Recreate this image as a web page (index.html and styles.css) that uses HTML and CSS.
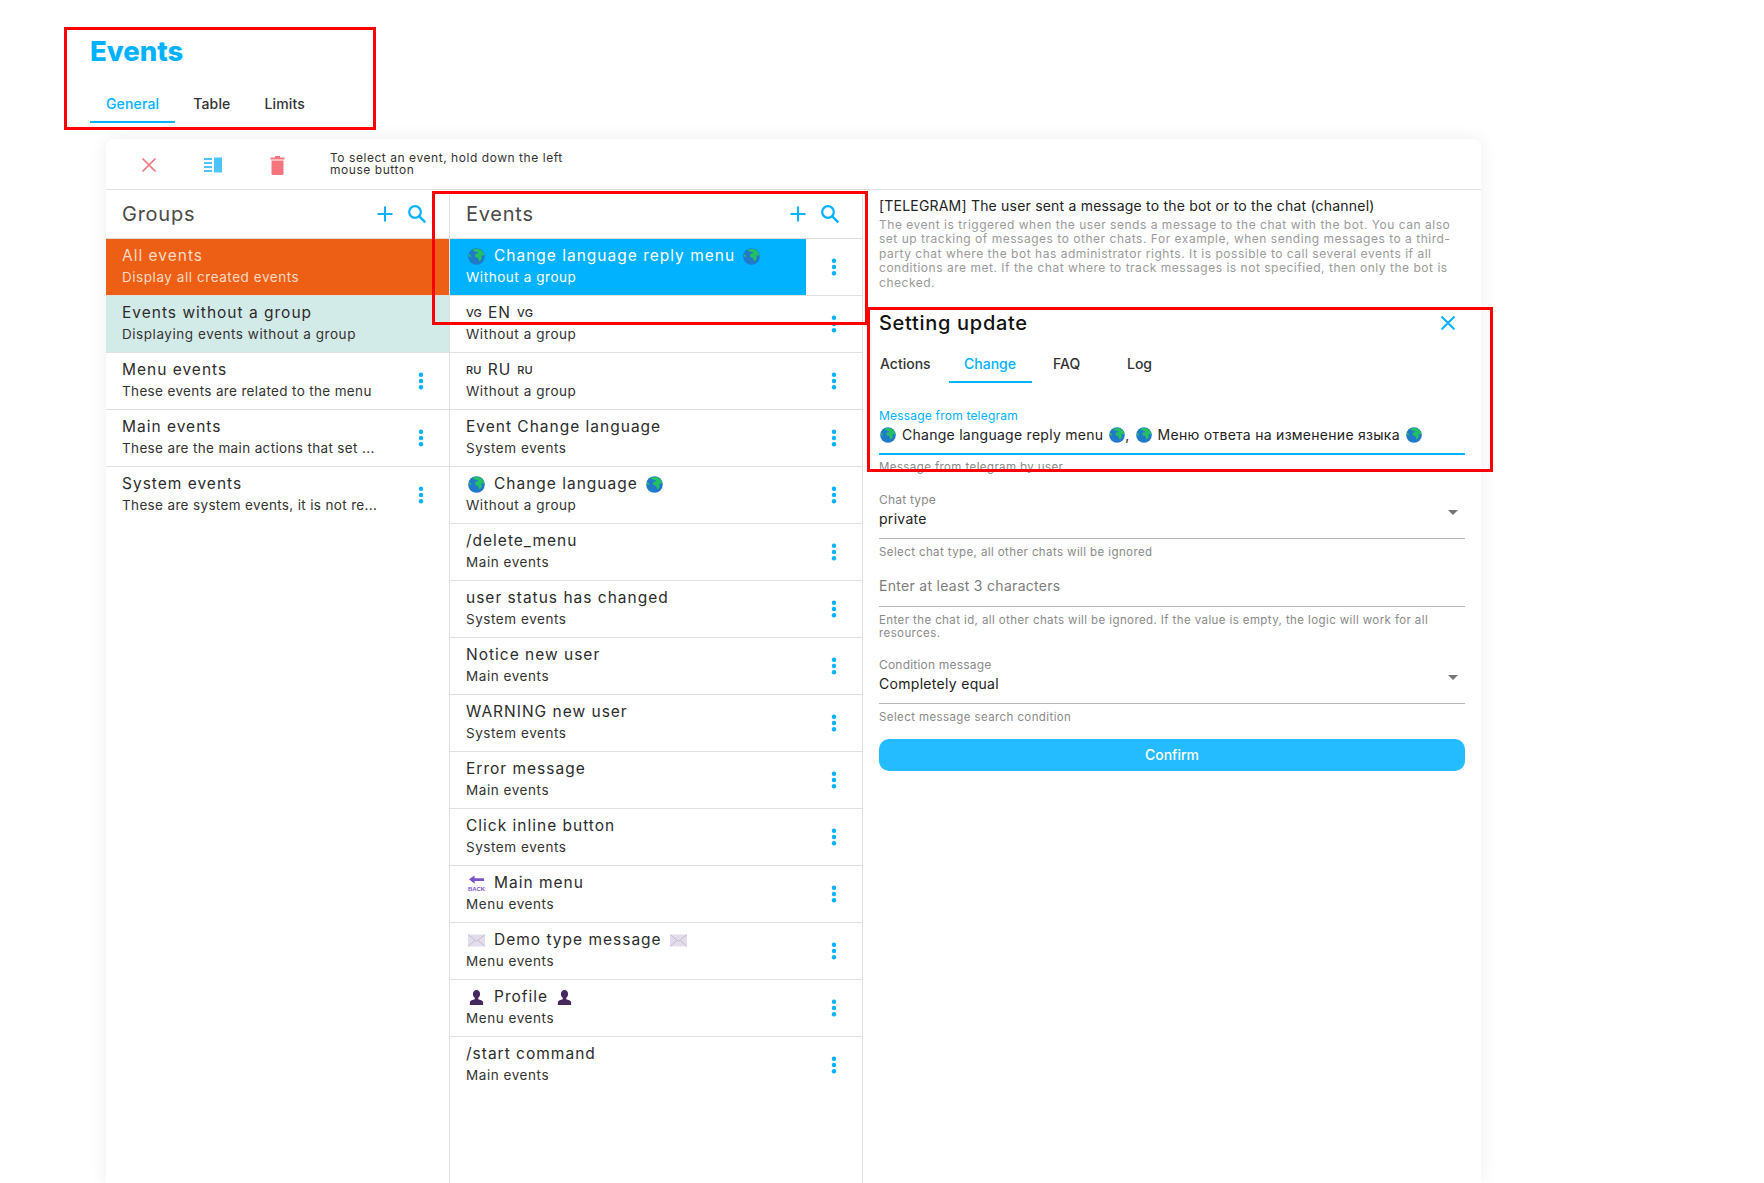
FILE: index.html
```html
<!DOCTYPE html>
<html lang="en">
<head>
<meta charset="utf-8">
<title>Events</title>
<link rel="stylesheet" href="styles.css">
</head>
<body>
<svg class="defs" aria-hidden="true">
  <symbol id="globe" viewBox="0 0 18 18">
    <circle cx="9" cy="9" r="8.800" fill="#2079c9"/>
    <path d="M4.500 2.200C7 .6 11.500.5 14 2.400c1.700 1.300 3 3.300 3.400 5.600-.8.400-2 .2-2.700-.5-.8.700-.6 1.800-.3 2.700.3 1.200-.8 2.900-2 3.700-.9.200-1.100-1.400-1.300-2.500-.3-1.200-1.700-1.100-2.800-1.700C7.200 9 6.900 7.600 7.700 6.600c.7-.8 2.100-.3 2.800-1 .3-.8-.9-1.400-2-1.200-1-.9-2.500-1-4-2.200z" fill="#25c063"/>
    <path d="M1.200 6.500c1.500.4 2.400 1.500 2.300 3-.7.300-1.800-.2-2.500-1.100z" fill="#25c063"/>
  </symbol>
  <symbol id="dots" viewBox="0 0 6 18">
    <circle cx="3" cy="2.800" r="2.200"/><circle cx="3" cy="9" r="2.200"/><circle cx="3" cy="15.200" r="2.200"/>
  </symbol>
  <symbol id="plus" viewBox="0 0 18 18">
    <path d="M9 1.500v15M1.500 9h15" fill="none" stroke="currentColor" stroke-width="2"/>
  </symbol>
  <symbol id="search" viewBox="0 0 20 20">
    <circle cx="8" cy="8" r="5.800" fill="none" stroke="currentColor" stroke-width="2.200"/>
    <path d="M12.300 12.300l6 6" fill="none" stroke="currentColor" stroke-width="2.400"/>
  </symbol>
  <symbol id="mail" viewBox="0 0 20 16">
    <rect y="1" width="20" height="14" fill="#e3dcea"/>
    <path d="M0 1l10 8 10-8M0 15l8-7M20 15l-8-7" fill="none" stroke="#c3b7d0" stroke-width="1"/>
  </symbol>
  <symbol id="bust" viewBox="0 0 18 18">
    <path d="M9 1c2.300 0 3.800 1.800 3.800 4.200 0 1.800-.9 3.300-2 4.100v1.600c2.300.7 4.700 1.400 5.200 2.800v3.300H2v-3.300c.5-1.400 2.900-2.100 5.200-2.800V9.300c-1.100-.8-2-2.300-2-4.100C5.200 2.800 6.700 1 9 1z" fill="#46285f"/>
  </symbol>
</svg>

<header class="page-head">
  <h1 class="page-title">Events</h1>
  <nav class="page-tabs">
    <span class="page-tab is-active">General</span>
    <span class="page-tab">Table</span>
    <span class="page-tab">Limits</span>
  </nav>
</header>

<main class="card">
  <div class="toolbar">
    <span class="tool">
      <svg class="tool-x" viewBox="0 0 16 16"><path d="M1.500 1.500l13 13M14.500 1.500l-13 13" fill="none" stroke="#f4757e" stroke-width="1.700"/></svg>
    </span>
    <span class="tool">
      <svg class="tool-cols" viewBox="0 0 18 16"><path d="M0 1h8v2H0zM0 5h8v2H0zM0 9h8v2H0zM0 13h8v2H0z" fill="#4dc4ff"/><rect x="10" y="0.500" width="8" height="15" fill="#4dc4ff"/></svg>
    </span>
    <span class="tool">
      <svg class="tool-trash" viewBox="0 0 14 20"><path d="M0 2.500h14v2H0zM4.500 1h5v2h-5z" fill="#f4757e"/><path d="M1 5.500h12v13a1.500 1.500 0 0 1-1.500 1.500h-9A1.500 1.500 0 0 1 1 18.500z" fill="#f4757e"/></svg>
    </span>
    <p class="tool-hint">To select an event, hold down the left mouse button</p>
  </div>

  <div class="columns">
    <section class="col col-groups">
      <div class="col-head">
        <h2 class="col-title">Groups</h2>
        <svg class="ico-plus"><use href="#plus"/></svg>
        <svg class="ico-search"><use href="#search"/></svg>
      </div>
      <div class="row row-orange">
        <div class="row-main"><div class="row-title">All events</div><div class="row-sub">Display all created events</div></div>
      </div>
      <div class="row row-teal">
        <div class="row-main"><div class="row-title">Events without a group</div><div class="row-sub">Displaying events without a group</div></div>
      </div>
      <div class="row">
        <div class="row-main"><div class="row-title">Menu events</div><div class="row-sub row-sub-tight">These events are related to the menu</div></div>
        <div class="row-act"><svg class="ico-dots"><use href="#dots"/></svg></div>
      </div>
      <div class="row">
        <div class="row-main"><div class="row-title">Main events</div><div class="row-sub row-sub-tight">These are the main actions that set ...</div></div>
        <div class="row-act"><svg class="ico-dots"><use href="#dots"/></svg></div>
      </div>
      <div class="row row-last">
        <div class="row-main"><div class="row-title">System events</div><div class="row-sub row-sub-tight">These are system events, it is not re...</div></div>
        <div class="row-act"><svg class="ico-dots"><use href="#dots"/></svg></div>
      </div>
    </section>

    <section class="col col-events">
      <div class="col-head">
        <h2 class="col-title">Events</h2>
        <svg class="ico-plus"><use href="#plus"/></svg>
        <svg class="ico-search"><use href="#search"/></svg>
      </div>
      <div class="row">
        <div class="row-main row-blue"><div class="row-title"><svg class="emo"><use href="#globe"/></svg>Change language reply menu<svg class="emo emo-end"><use href="#globe"/></svg></div><div class="row-sub">Without a group</div></div>
        <div class="row-act"><svg class="ico-dots"><use href="#dots"/></svg></div>
      </div>
      <div class="row">
        <div class="row-main"><div class="row-title"><span class="flag">VG</span>EN<span class="flag flag-end">VG</span></div><div class="row-sub">Without a group</div></div>
        <div class="row-act"><svg class="ico-dots"><use href="#dots"/></svg></div>
      </div>
      <div class="row">
        <div class="row-main"><div class="row-title"><span class="flag">RU</span>RU<span class="flag flag-end">RU</span></div><div class="row-sub">Without a group</div></div>
        <div class="row-act"><svg class="ico-dots"><use href="#dots"/></svg></div>
      </div>
      <div class="row">
        <div class="row-main"><div class="row-title">Event Change language</div><div class="row-sub">System events</div></div>
        <div class="row-act"><svg class="ico-dots"><use href="#dots"/></svg></div>
      </div>
      <div class="row">
        <div class="row-main"><div class="row-title"><svg class="emo"><use href="#globe"/></svg>Change language<svg class="emo emo-end"><use href="#globe"/></svg></div><div class="row-sub">Without a group</div></div>
        <div class="row-act"><svg class="ico-dots"><use href="#dots"/></svg></div>
      </div>
      <div class="row">
        <div class="row-main"><div class="row-title">/delete_menu</div><div class="row-sub">Main events</div></div>
        <div class="row-act"><svg class="ico-dots"><use href="#dots"/></svg></div>
      </div>
      <div class="row">
        <div class="row-main"><div class="row-title">user status has changed</div><div class="row-sub">System events</div></div>
        <div class="row-act"><svg class="ico-dots"><use href="#dots"/></svg></div>
      </div>
      <div class="row">
        <div class="row-main"><div class="row-title">Notice new user</div><div class="row-sub">Main events</div></div>
        <div class="row-act"><svg class="ico-dots"><use href="#dots"/></svg></div>
      </div>
      <div class="row">
        <div class="row-main"><div class="row-title">WARNING new user</div><div class="row-sub">System events</div></div>
        <div class="row-act"><svg class="ico-dots"><use href="#dots"/></svg></div>
      </div>
      <div class="row">
        <div class="row-main"><div class="row-title">Error message</div><div class="row-sub">Main events</div></div>
        <div class="row-act"><svg class="ico-dots"><use href="#dots"/></svg></div>
      </div>
      <div class="row">
        <div class="row-main"><div class="row-title">Click inline button</div><div class="row-sub">System events</div></div>
        <div class="row-act"><svg class="ico-dots"><use href="#dots"/></svg></div>
      </div>
      <div class="row">
        <div class="row-main"><div class="row-title"><svg class="emo" viewBox="0 0 18 18"><path d="M1 4.500L7 .5v3h10v2.800H7v3z" fill="#7a55c7"/><text class="back-text" x="9" y="16.500" text-anchor="middle">BACK</text></svg>Main menu</div><div class="row-sub">Menu events</div></div>
        <div class="row-act"><svg class="ico-dots"><use href="#dots"/></svg></div>
      </div>
      <div class="row">
        <div class="row-main"><div class="row-title"><svg class="emo"><use href="#mail"/></svg>Demo type message<svg class="emo emo-end"><use href="#mail"/></svg></div><div class="row-sub">Menu events</div></div>
        <div class="row-act"><svg class="ico-dots"><use href="#dots"/></svg></div>
      </div>
      <div class="row">
        <div class="row-main"><div class="row-title"><svg class="emo"><use href="#bust"/></svg>Profile<svg class="emo emo-end"><use href="#bust"/></svg></div><div class="row-sub">Menu events</div></div>
        <div class="row-act"><svg class="ico-dots"><use href="#dots"/></svg></div>
      </div>
      <div class="row row-last">
        <div class="row-main"><div class="row-title">/start command</div><div class="row-sub">Main events</div></div>
        <div class="row-act"><svg class="ico-dots"><use href="#dots"/></svg></div>
      </div>
    </section>

    <section class="detail">
      <h3 class="info-title">[TELEGRAM] The user sent a message to the bot or to the chat (channel)</h3>
      <p class="info-text">The event is triggered when the user sends a message to the chat with the bot. You can also set up tracking of messages to other chats. For example, when sending messages to a third-party chat where the bot has administrator rights. It is possible to call several events if all conditions are met. If the chat where to track messages is not specified, then only the bot is checked.</p>
      <div class="setting-head">
        <h2 class="setting-title">Setting update</h2>
        <svg class="setting-close" viewBox="0 0 16 16"><path d="M1.500 1.500l13 13M14.500 1.500l-13 13" fill="none" stroke="#00b2ff" stroke-width="2"/></svg>
      </div>
      <nav class="detail-tabs">
        <span class="dtab dtab-actions">Actions</span>
        <span class="dtab dtab-change">Change</span>
        <span class="dtab dtab-faq">FAQ</span>
        <span class="dtab dtab-log">Log</span>
      </nav>

      <div class="field field-msg">
        <div class="field-label is-blue">Message from telegram</div>
        <div class="field-value field-line is-focus"><svg class="emo emo-sm"><use href="#globe"/></svg>Change language reply menu<svg class="emo emo-in"><use href="#globe"/></svg>, <svg class="emo emo-in emo-next"><use href="#globe"/></svg>Меню ответа на изменение языка<svg class="emo emo-in emo-last"><use href="#globe"/></svg></div>
        <div class="field-hint">Message from telegram by user</div>
      </div>

      <div class="field">
        <div class="field-label">Chat type</div>
        <div class="field-value field-line">private<span class="caret"></span></div>
        <div class="field-hint field-hint-low">Select chat type, all other chats will be ignored</div>
      </div>

      <div class="field field-plain">
        <div class="field-value field-line is-placeholder">Enter at least 3 characters</div>
        <div class="field-hint field-hint-low">Enter the chat id, all other chats will be ignored. If the value is empty, the logic will work for all resources.</div>
      </div>

      <div class="field">
        <div class="field-label">Condition message</div>
        <div class="field-value field-line">Completely equal<span class="caret"></span></div>
        <div class="field-hint field-hint-low">Select message search condition</div>
      </div>

      <button class="confirm" type="button">Confirm</button>
    </section>
  </div>
</main>

<div class="mark mark-head"></div>
<div class="mark mark-events"></div>
<div class="mark mark-setting"></div>
</body>
</html>
```
FILE: styles.css
```css
* { box-sizing: border-box; }

html, body { height: 100%; }

body {
  margin: 0;
  height: 1183px;
  overflow: hidden;
  position: relative;
  background: #fff;
  color: #222;
  font-family: Inter, "Noto Sans", sans-serif;
  display: flex;
  flex-direction: column;
}

.defs { position: absolute; width: 0; height: 0; }

.page-head { padding: 35px 0 16px 90px; flex: none; }

.page-title {
  margin: 0;
  height: 32px;
  font-size: 27.500px;
  line-height: 32px;
  font-weight: 800;
  color: #00b2ff;
}

.page-tabs { display: flex; gap: 2px; margin-top: 19px; height: 37px; }

.page-tab {
  padding: 0 16px;
  font-size: 14px;
  line-height: 36px;
  font-weight: 500;
  letter-spacing: .15px;
  color: #333;
}

.page-tab.is-active {
  color: #00b2ff;
  border-bottom: 2px solid #00b2ff;
}

.card {
  flex: 1;
  min-height: 0;
  width: 1375px;
  margin-left: 106px;
  border-radius: 8px 8px 0 0;
  background: #fff;
  box-shadow: 0 0 18px rgba(0, 0, 0, .07);
  display: flex;
  flex-direction: column;
}

.toolbar {
  flex: none;
  height: 51px;
  padding: 1px 0 0 11px;
  border-bottom: 1px solid #e0e0e0;
  display: flex;
  align-items: center;
}

.tool {
  width: 64px;
  display: flex;
  justify-content: center;
}

.tool-x { width: 16px; height: 16px; }
.tool-cols { width: 18px; height: 16px; }
.tool-trash { width: 15px; height: 20px; }

.tool-hint {
  width: 250px;
  margin: -2px 0 0 21px;
  font-size: 12px;
  line-height: 12px;
  letter-spacing: .55px;
  color: #333;
}

.columns { flex: 1; min-height: 0; display: flex; }

.col { border-right: 1px solid #e0e0e0; flex: none; }
.col-groups { width: 344px; }
.col-events { width: 413px; }

.col-head {
  height: 49px;
  padding-left: 16px;
  border-bottom: 1px solid #ddd;
  display: flex;
  align-items: center;
}

.col-title {
  flex: 1;
  margin: -1px 0 0;
  font-size: 20px;
  line-height: 24px;
  font-weight: 400;
  letter-spacing: .75px;
  color: #4a4a4a;
}

.ico-plus { width: 18px; height: 18px; color: #00b2ff; margin-right: 13px; }
.ico-search { width: 20px; height: 20px; color: #00b2ff; margin-right: 22px; }

.row {
  height: 57px;
  border-bottom: 1px solid #e0e0e0;
  display: flex;
}

.row-last { height: 56px; border-bottom: 0; }

.row-main { flex: 1; min-width: 0; padding: 7px 0 0 16px; }

.row-act {
  flex: none;
  width: 56px;
  display: flex;
  align-items: center;
  justify-content: center;
}

.ico-dots { width: 6px; height: 18px; fill: #00b2ff; }

.row-title {
  display: flex;
  align-items: center;
  height: 20px;
  font-size: 15.500px;
  line-height: 20px;
  letter-spacing: 1px;
  color: #2c2c2c;
  white-space: nowrap;
}

.row-sub {
  margin-top: 2px;
  font-size: 13.500px;
  line-height: 18px;
  letter-spacing: .55px;
  color: #333;
  white-space: nowrap;
}

.row-sub-tight { letter-spacing: .35px; }

.row-orange { background: #ec5f14; }
.row-orange .row-title, .row-orange .row-sub { color: #fbd9c5; }
.row-teal { background: #d3ebe8; }
.row-blue { background: #00b2ff; }
.row-blue .row-title, .row-blue .row-sub { color: #fff; }

.emo { width: 17px; height: 17px; flex: none; margin-right: 9px; margin-left: 2px; }
.emo-end { margin: 0 0 0 8px; }
.back-text { font-size: 6.300px; font-weight: 700; letter-spacing: 0; fill: #7a55c7; font-family: "Liberation Sans", sans-serif; }

.flag { font-size: 11px; font-weight: 500; letter-spacing: .2px; margin-right: 6px; }
.flag-end { margin: 0 0 0 6px; }

.detail { flex: 1; min-width: 0; padding: 6px 16px 0; }

.info-title {
  margin: 0;
  font-size: 14px;
  line-height: 20px;
  font-weight: 400;
  letter-spacing: .2px;
  color: #222;
  white-space: nowrap;
}

.info-text {
  margin: 2px 0 0;
  font-size: 12px;
  line-height: 14.400px;
  letter-spacing: .52px;
  color: #9a9a9a;
}

.setting-head {
  margin-top: 19px;
  height: 28px;
  display: flex;
  align-items: center;
}

.setting-title {
  flex: 1;
  margin: 0;
  font-size: 20px;
  line-height: 28px;
  font-weight: 500;
  letter-spacing: .7px;
  color: #111;
}

.setting-close { width: 16px; height: 16px; margin-right: 9px; }

.detail-tabs { display: flex; margin-top: 8px; height: 38px; }

.dtab {
  font-size: 14px;
  line-height: 38px;
  font-weight: 500;
  color: #333;
}

.dtab-actions { width: 70px; padding-left: 1px; }
.dtab-change { width: 83px; padding-left: 15px; color: #00b2ff; border-bottom: 2px solid #00b2ff; }
.dtab-faq { width: 74px; padding-left: 21px; }
.dtab-log { padding-left: 21px; }

.field { margin-top: 19px; }
.field-msg { margin-top: 26px; }
.field-plain { margin-top: 18px; }

.field-label {
  font-size: 12px;
  line-height: 14px;
  letter-spacing: .2px;
  color: #8a8a8a;
}

.is-blue { color: #00b2ff; }

.field-value {
  margin-top: 2px;
  font-size: 14px;
  line-height: 20px;
  letter-spacing: .3px;
  color: #222;
  display: flex;
  align-items: center;
  position: relative;
  white-space: nowrap;
}

.field-line { padding-bottom: 9px; border-bottom: 1px solid #b5b5b5; }
.field-plain .field-line { margin-top: 0; padding-bottom: 10px; }
.is-focus { padding-bottom: 8px; border-bottom: 2px solid #00b2ff; height: 30px; letter-spacing: .27px; }
.is-placeholder { color: #7d7d7d; }

.field-hint {
  margin-top: 6px;
  font-size: 11.500px;
  line-height: 12.500px;
  letter-spacing: .4px;
  color: #8a8a8a;
}

.field-hint-low { margin-top: 7px; }

.emo-sm, .emo-in { width: 16px; height: 16px; }
.emo-sm { margin: 0 6px 0 1px; }
.emo-in { margin: 0 0 0 6px; }
.emo-next { margin: 0 6px 0 6px; }
.emo-last { margin: 0 0 0 6px; }

.caret {
  position: absolute;
  right: 7px;
  top: 1px;
  width: 0;
  height: 0;
  border-left: 5px solid transparent;
  border-right: 5px solid transparent;
  border-top: 5px solid #757575;
}

.confirm {
  display: block;
  width: 100%;
  height: 32px;
  margin-top: 15px;
  padding: 0;
  border: 0;
  border-radius: 10px;
  background: #24bcff;
  color: #fff;
  font: 500 14px/32px Inter, "Noto Sans", sans-serif;
}

.mark { position: absolute; border: 3px solid #f00; }
.mark-head { left: 64px; top: 27px; width: 312px; height: 103px; }
.mark-events { left: 432px; top: 191px; width: 436px; height: 134px; }
.mark-setting { left: 867px; top: 307px; width: 626px; height: 165px; }
```
